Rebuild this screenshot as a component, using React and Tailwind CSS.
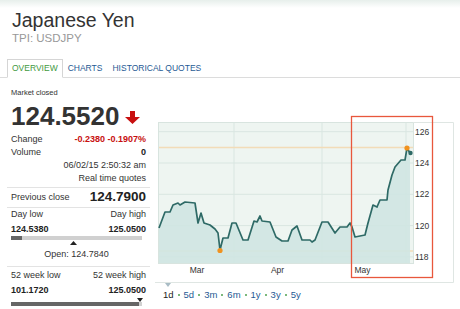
import React from 'react';

// price line, traced in chart coordinates (origin = top-left of the chart svg)
const points = [
  [4, 118], [10, 102], [15, 102], [18, 95], [23, 93], [25, 95], [30, 92], [40, 93],
  [43, 113], [46, 103], [49, 113], [55, 115], [60, 119], [63, 123], [65, 140], [68, 128],
  [73, 128], [77, 113], [81, 113], [88, 130], [93, 130], [99, 111], [102, 112], [105, 106],
  [107, 111], [115, 112], [121, 127], [127, 131], [133, 131], [137, 120], [142, 116],
  [147, 130], [155, 130], [157, 132], [160, 130], [167, 112], [173, 112], [180, 123],
  [185, 117], [192, 117], [195, 113], [197, 117], [200, 127], [210, 125], [213, 113],
  [218, 95], [222, 97], [225, 90], [232, 90], [233, 80], [237, 65], [240, 57], [246, 50],
  [250, 50], [252, 38], [255, 43],
];

const linePath = 'M' + points.map(([x, y]) => `${x} ${y}`).join(' L');
const areaPath = linePath + ' L255 153 L4 153 Z';

const yTicks = [
  { label: '126', y: 21.7 },
  { label: '124', y: 53 },
  { label: '122', y: 84.3 },
  { label: '120', y: 115.6 },
  { label: '118', y: 146.9 },
];

const months = [
  { label: 'Mar', x: 42 },
  { label: 'Apr', x: 122.5 },
  { label: 'May', x: 207.5 },
];

const ranges = ['1d', '5d', '3m', '6m', '1y', '3y', '5y'];

const PriceChart = () => (
  <svg width="305" height="178" viewBox="0 0 305 178" className="block">
    {/* plot area */}
    <rect x="3.5" y="12.5" width="255" height="141" fill="#eef5f1" stroke="#d8e4df" />
    {yTicks.map((t) => (
      <line key={t.label} x1="4" x2="258" y1={t.y} y2={t.y} stroke="#d9e6e1" strokeWidth="1" />
    ))}
    {[79, 167, 251].map((x) => (
      <line key={x} x1={x} x2={x} y1="13" y2="153" stroke="#d9e6e1" strokeWidth="1" />
    ))}

    {/* outer frame */}
    <line x1="258" x2="298.5" y1="12.5" y2="12.5" stroke="#dfe6e3" />
    <line x1="298.5" x2="298.5" y1="12.5" y2="172.5" stroke="#dfe6e3" />
    <line x1="0" x2="298.5" y1="172.5" y2="172.5" stroke="#dfe6e3" />

    {/* high / low marks */}
    <line x1="4" x2="258" y1="37.5" y2="37.5" stroke="#f2dcb8" strokeWidth="1.5" />
    <line x1="4" x2="258" y1="141" y2="141" stroke="#f2dcb8" strokeWidth="1.5" />

    <path d={areaPath} fill="#cfe6e2" fillOpacity="0.9" />
    <path d={linePath} fill="none" stroke="#2e6a66" strokeWidth="1.7" strokeLinejoin="round" />

    <circle cx="252" cy="38" r="2.6" fill="#f0921f" />
    <circle cx="65" cy="140.5" r="2.6" fill="#f0921f" />
    <circle cx="255.5" cy="43" r="2.2" fill="#2e6a66" />

    {yTicks.map((t) => (
      <text key={t.label} x="260" y={t.y + 3} fontSize="8.5" fill="#333" fontFamily="Liberation Sans, Arial, sans-serif">
        {t.label}
      </text>
    ))}
    {months.map((m) => (
      <text key={m.label} x={m.x} y="163" fontSize="8.5" fill="#333" textAnchor="middle" fontFamily="Liberation Sans, Arial, sans-serif">
        {m.label}
      </text>
    ))}

    {/* selection box */}
    <rect x="196.5" y="6.5" width="81" height="161" fill="none" stroke="#e8573c" strokeWidth="1.3" />

    {/* active range pointer */}
    <polygon points="10,173 16,173 13,177" fill="#a9bcc5" />
  </svg>
);

const DownArrow = () => (
  <svg width="15" height="13" viewBox="0 0 15 13">
    <path d="M5 0 H10 V6 H15 L7.5 13 L0 6 H5 Z" fill="#c81010" />
  </svg>
);

const Row = ({ label, children }) => (
  <div className="flex justify-between items-center h-[13px] leading-[13px] px-[4px] text-[9px]">
    <span className="text-[#333]">{label}</span>
    {children}
  </div>
);

export default function App() {
  return (
    <div className="w-[460px] h-[309px] overflow-hidden bg-[linear-gradient(to_bottom,#e7efeb,#ffffff_8px)] font-['Liberation_Sans',Arial,sans-serif] text-[#333]">
      {/* header */}
      <div className="pl-[12px] pt-[9px]">
        <h1 className="text-[19.5px] leading-[22px] text-[#333]">Japanese Yen</h1>
        <div className="text-[11.5px] leading-[14px] text-[#999]">TPI: USDJPY</div>
      </div>

      {/* tabs */}
      <div className="mt-[14px] flex items-end h-[19px] border-b border-[#dcdcdc] pl-[7px] text-[8.5px]">
        <div className="-mb-px h-[19px] flex items-center px-[4px] border border-[#d5d5d5] border-b-white bg-white text-[#3f9a3f]">
          OVERVIEW
        </div>
        <div className="h-[18px] flex items-center px-[5px] text-[#1f5a94]">CHARTS</div>
        <div className="h-[18px] flex items-center px-[5px] text-[#1f5a94]">HISTORICAL QUOTES</div>
      </div>

      <div className="flex">
        {/* quote summary */}
        <div className="ml-[7px] w-[143px] shrink-0">
          <div className="pt-[10px] px-[4px] text-[7.5px] leading-[10px] text-[#333]">Market closed</div>
          <div className="mt-[3px] flex items-center px-[4px] h-[30px] leading-[30px]">
            <span className="text-[26px] font-bold text-[#333]">124.5520</span>
            <span className="ml-[6px] mt-[2px]"><DownArrow /></span>
          </div>
          <div className="mt-[2px] pb-[2px] border-b border-[#e3e3e3]">
            <Row label="Change">
              <span className="font-bold text-[#c81010]">-0.2380 -0.1907%</span>
            </Row>
            <Row label="Volume">
              <span className="font-bold text-[#222]">0</span>
            </Row>
            <div className="h-[13px] leading-[13px] px-[4px] text-[9px] text-right">06/02/15 2:50:32 am</div>
            <div className="h-[13px] leading-[13px] px-[4px] text-[9px] text-right">Real time quotes</div>
          </div>

          <div className="flex justify-between items-center h-[20px] px-[4px] border-b border-[#e3e3e3]">
            <span className="text-[9px]">Previous close</span>
            <span className="text-[13.5px] font-bold text-[#222]">124.7900</span>
          </div>

          <div className="px-[4px] pb-[6px] border-b border-[#e3e3e3]">
            <div className="flex justify-between h-[12px] leading-[12px] text-[9px]">
              <span>Day low</span>
              <span>Day high</span>
            </div>
            <div className="mt-[3px] flex justify-between h-[12px] leading-[12px] text-[9px] font-bold text-[#222]">
              <span>124.5380</span>
              <span>125.0500</span>
            </div>
            <div className="mt-[1px] flex w-[131px] h-[4px] bg-[#d0d0d0]">
              <div className="w-[11px] h-full bg-[#666]" />
            </div>
            <div className="mt-[1px] pl-[59px] h-[4px]">
              <svg width="7" height="4" viewBox="0 0 7 4" className="block">
                <polygon points="3.5,0 7,4 0,4" fill="#222" />
              </svg>
            </div>
            <div className="mt-[3px] w-[131px] text-center h-[12px] leading-[12px] text-[9px]">Open: 124.7840</div>
          </div>

          <div className="px-[4px] pt-[2px]">
            <div className="flex justify-between h-[13px] leading-[13px] text-[9px]">
              <span>52 week low</span>
              <span>52 week high</span>
            </div>
            <div className="mt-[2px] flex justify-between h-[12px] leading-[12px] text-[9px] font-bold text-[#222]">
              <span>101.1720</span>
              <span>125.0500</span>
            </div>
            <div className="relative mt-[2px] w-[131px] h-[8px]">
              <svg width="6" height="4" viewBox="0 0 6 4" className="absolute left-[126px] top-0">
                <polygon points="0,0 6,0 3,4" fill="#222" />
              </svg>
              <div className="absolute left-0 bottom-0 flex w-[131px] h-[4px] bg-[#d0d0d0]">
                <div className="w-[128px] h-full bg-[#666]" />
              </div>
            </div>
          </div>
        </div>

        {/* chart */}
        <div className="ml-[5px] w-[305px] shrink-0 pt-[32px]">
          <PriceChart />
          <div className="mt-[1px] pl-[8px] flex items-center gap-[4px] h-[12px] text-[9.5px] leading-[12px]">
            {ranges.map((r, i) => (
              <React.Fragment key={r}>
                {i > 0 && <span className="w-[2px] h-[2px] rounded-full bg-[#4fa04f]" />}
                <span className={i === 0 ? 'text-[#222]' : 'text-[#1f5a94]'}>{r}</span>
              </React.Fragment>
            ))}
          </div>
        </div>
      </div>
    </div>
  );
}
